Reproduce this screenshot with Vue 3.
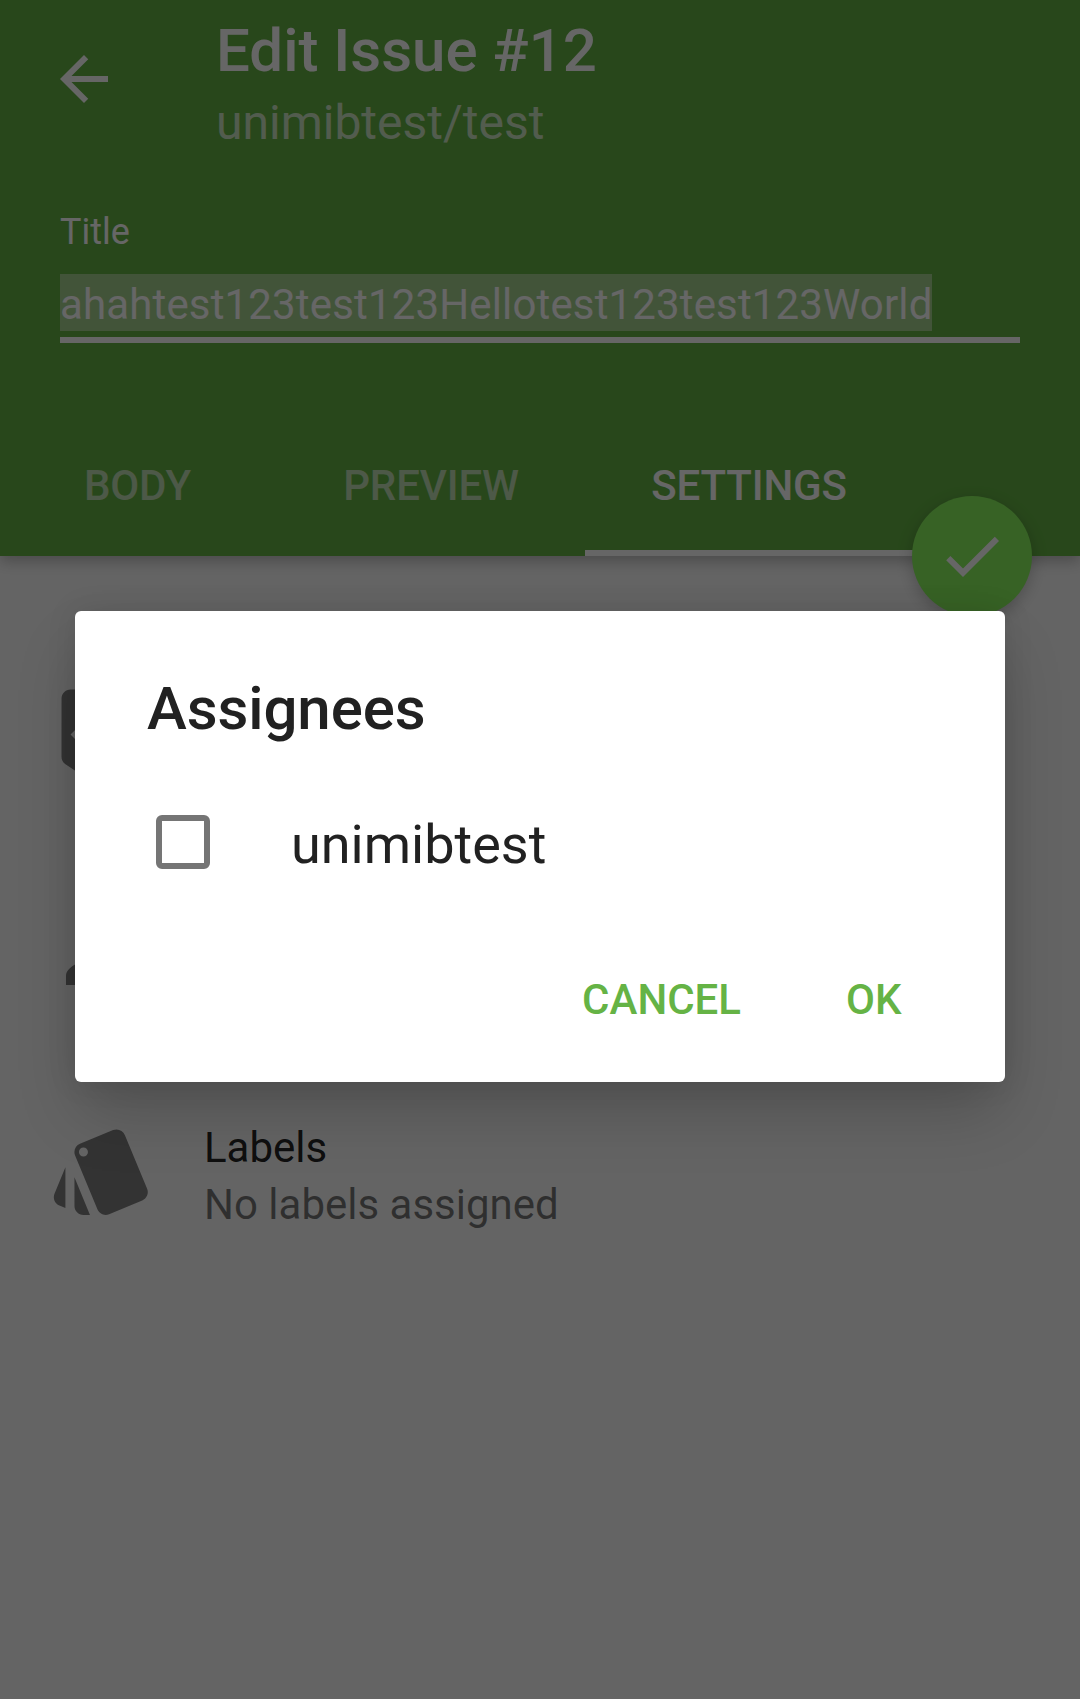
<script setup>
const tabs = [
  { id: 'body', label: 'BODY', active: false },
  { id: 'preview', label: 'PREVIEW', active: false },
  { id: 'settings', label: 'SETTINGS', active: true },
]
</script>

<template>
  <div class="screen">
    <header class="app-bar">
      <div class="toolbar">
        <svg class="back" viewBox="0 0 24 24"><path d="M20 11H7.83l5.59-5.59L12 4l-8 8 8 8 1.41-1.41L7.83 13H20v-2z" /></svg>
        <div class="heading">
          <div class="heading-title">Edit Issue #12</div>
          <div class="heading-sub">unimibtest/test</div>
        </div>
      </div>
      <div class="field">
        <label class="field-label">Title</label>
        <div class="field-input"><span class="selected">ahahtest123test123Hellotest123test123World</span></div>
      </div>
      <nav class="tabs">
        <div v-for="tab in tabs" :key="tab.id" class="tab" :class="[tab.id, { active: tab.active }]">{{ tab.label }}</div>
      </nav>
      <div class="fab">
        <svg viewBox="0 0 24 24"><path d="M9 16.2L4.8 12l-1.4 1.4L9 19 21 7l-1.4-1.4L9 16.2z" /></svg>
      </div>
    </header>

    <main class="settings-list">
      <div class="row milestone">
        <svg viewBox="0 0 24 24"><path d="M19 1H5c-1.1 0-1.99.9-1.99 2L3 15.93c0 .69.35 1.3.88 1.66L12 23l8.11-5.41c.53-.36.88-.97.88-1.66L21 3c0-1.1-.9-2-2-2zm-9 15l-5-5 1.41-1.41L10 13.17l7.59-7.59L19 7l-9 9z" /></svg>
      </div>
      <div class="row assignees">
        <svg viewBox="0 0 24 24"><path d="M12 12c2.21 0 4-1.79 4-4s-1.79-4-4-4-4 1.79-4 4 1.79 4 4 4zm0 2c-2.67 0-8 1.34-8 4v2h16v-2c0-2.66-5.33-4-8-4z" /></svg>
      </div>
      <div class="row">
        <svg viewBox="0 0 24 24"><path d="M2.53 19.65l1.34.56v-9.03l-2.43 5.86c-.41 1.02.08 2.19 1.09 2.61zm19.5-3.7L17.07 3.98c-.31-.75-1.04-1.21-1.81-1.23-.26 0-.53.04-.79.15L7.1 5.95c-.75.31-1.21 1.03-1.23 1.8-.01.27.04.54.15.8l4.96 11.97c.31.76 1.05 1.22 1.83 1.23.26 0 .52-.05.77-.15l7.36-3.05c1.02-.42 1.51-1.59 1.09-2.6zM7.88 8.75c-.55 0-1-.45-1-1s.45-1 1-1 1 .45 1 1-.45 1-1 1zm-2 11c0 1.1.9 2 2 2h1.45l-3.45-8.34v6.34z" /></svg>
        <div class="row-text">
          <div class="row-title">Labels</div>
          <div class="row-sub">No labels assigned</div>
        </div>
      </div>
    </main>

    <div class="scrim">
      <section class="dialog">
        <h2 class="dialog-title">Assignees</h2>
        <div class="option">
          <span class="checkbox"></span>
          <span class="option-name">unimibtest</span>
        </div>
        <div class="actions">
          <span class="action">CANCEL</span>
          <span class="action">OK</span>
        </div>
      </section>
    </div>
  </div>
</template>

<style>
body {
  margin: 0;
}
</style>

<style scoped>
.screen {
  position: relative;
  width: 1080px;
  height: 1699px;
  overflow: hidden;
  background: #fafafa;
  font-family: Roboto, sans-serif;
}

.app-bar {
  position: relative;
  z-index: 1;
  display: flex;
  flex-direction: column;
  height: 556px;
  background: #64b244;
  box-shadow: 0 5px 14px rgba(0, 0, 0, 0.26);
  color: #fff;
}

.toolbar {
  display: flex;
  align-items: flex-start;
  height: 205px;
  padding-left: 48px;
  box-sizing: border-box;
}

.back {
  width: 72px;
  height: 72px;
  margin-top: 43px;
  fill: #fff;
}

.heading {
  margin: 15px 0 0 96px;
}

.heading-title {
  font-size: 60px;
  font-weight: 500;
  line-height: 71px;
}

.heading-sub {
  margin-top: 8px;
  font-size: 48px;
  line-height: 57px;
  color: rgba(255, 255, 255, 0.7);
}

.field {
  display: flex;
  flex-direction: column;
  margin: 0 60px;
  height: 138px;
  border-bottom: 6px solid #fff;
  box-sizing: border-box;
}

.field-label {
  margin-top: 6px;
  font-size: 36px;
  line-height: 43px;
}

.field-input {
  display: flex;
  margin-top: 20px;
  font-size: 42px;
  line-height: 53px;
  letter-spacing: 0.15px;
  white-space: nowrap;
}

.selected {
  width: 872px;
  padding-top: 4px;
  background: #a5d28f;
}

.tabs {
  display: flex;
  height: 144px;
  margin-top: auto;
}

.tab {
  display: flex;
  align-items: center;
  justify-content: center;
  box-sizing: border-box;
  font-size: 42px;
  font-weight: 500;
  letter-spacing: -0.15px;
  padding-top: 3px;
  color: rgba(255, 255, 255, 0.6);
}

.body {
  width: 277px;
  padding-right: 2px;
}

.preview {
  width: 308px;
}

.settings {
  width: 328px;
}

.tab.active {
  padding-top: 9px;
  border-bottom: 6px solid #fff;
  color: #fff;
}

.fab {
  position: absolute;
  right: 48px;
  bottom: -60px;
  display: flex;
  align-items: center;
  justify-content: center;
  width: 120px;
  height: 120px;
  border-radius: 50%;
  background: #8af45e;
  box-shadow: 0 5px 16px rgba(0, 0, 0, 0.22);
}

.fab svg {
  width: 72px;
  height: 72px;
  fill: #fff;
}

.settings-list {
  display: flex;
  flex-direction: column;
  padding: 129px 48px 0;
}

.row {
  display: flex;
  height: 108px;
}

.milestone {
  margin-bottom: 102px;
}

.assignees {
  margin-bottom: 114px;
}

.row svg {
  width: 108px;
  height: 108px;
  fill: rgba(0, 0, 0, 0.49);
}

.row-text {
  margin: 6px 0 0 48px;
  font-size: 42px;
  line-height: 49px;
}

.row-title {
  color: rgba(0, 0, 0, 0.87);
}

.row-sub {
  margin-top: 8px;
  color: rgba(0, 0, 0, 0.54);
}

.scrim {
  position: absolute;
  inset: 0;
  z-index: 2;
  padding: 611px 75px 0;
  background: rgba(0, 0, 0, 0.6);
}

.dialog {
  display: flex;
  flex-direction: column;
  box-sizing: border-box;
  height: 471px;
  padding: 62px 72px 0;
  border-radius: 6px;
  background: #fff;
  box-shadow: 0 34px 60px -6px rgba(0, 0, 0, 0.2), 0 0 30px rgba(0, 0, 0, 0.1);
  color: #212121;
}

.dialog-title {
  margin: 0;
  font-size: 60px;
  font-weight: 500;
  line-height: 71px;
  letter-spacing: -0.1px;
}

.option {
  display: flex;
  align-items: center;
  height: 144px;
  margin-top: 29px;
  padding-left: 9px;
}

.checkbox {
  box-sizing: border-box;
  width: 54px;
  height: 54px;
  margin-top: -6px;
  border: 6px solid #757575;
  border-radius: 6px;
}

.option-name {
  margin-left: 81px;
  font-size: 54px;
  line-height: 64px;
}

.actions {
  display: flex;
  justify-content: flex-end;
  gap: 105px;
  margin-top: 58px;
  padding-right: 31.5px;
}

.action {
  font-size: 42px;
  font-weight: 500;
  line-height: 49px;
  color: #65b345;
}
</style>
